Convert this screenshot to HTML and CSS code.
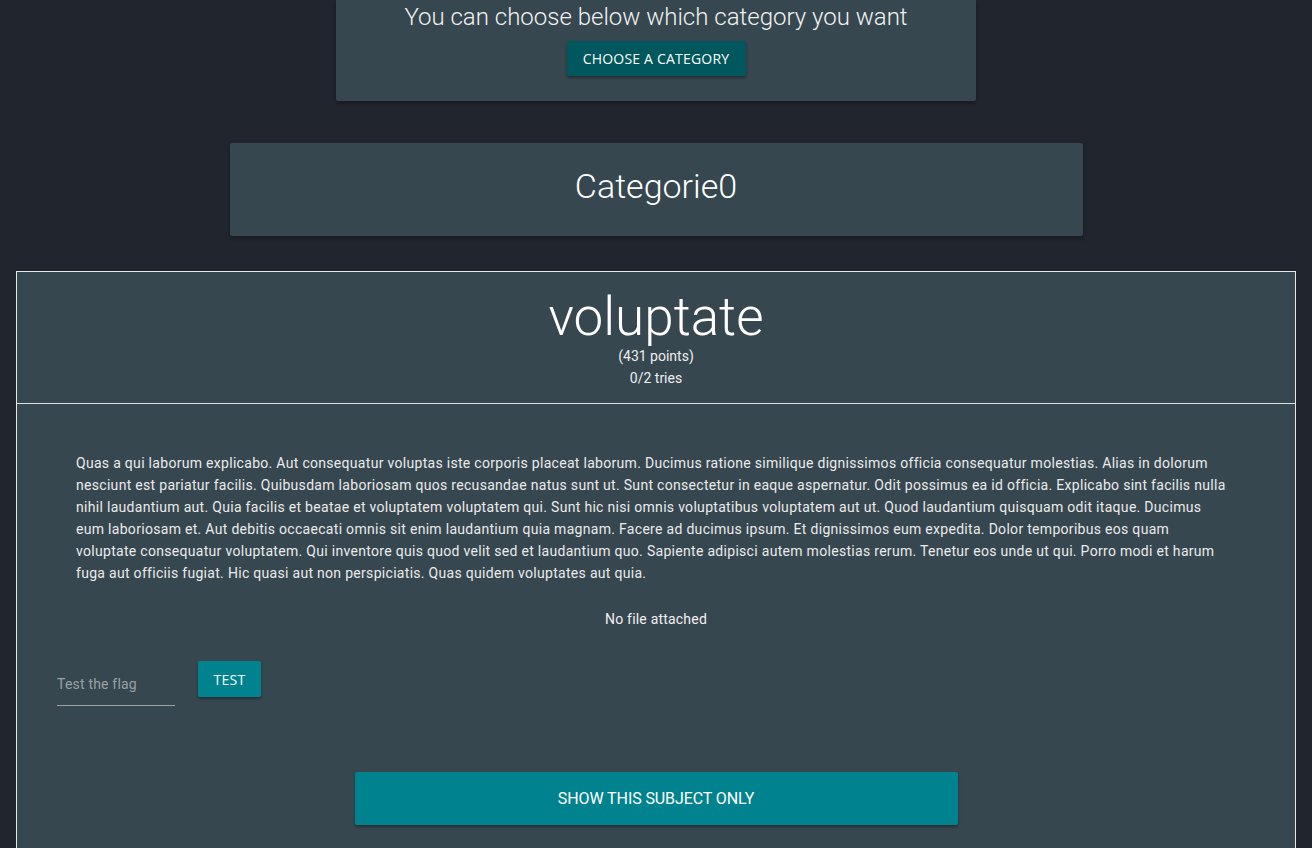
FILE: index.html
```html
<!DOCTYPE html>
<html lang="en">
<head>
<meta charset="utf-8">
<title>Challenges</title>
<link rel="stylesheet" href="styles.css">
</head>
<body>
<div class="page">
  <section class="choose-card">
    <h2 class="choose-title">You can choose below which category you want</h2>
    <button class="btn btn-dark">CHOOSE A CATEGORY</button>
  </section>

  <section class="category-card">
    <h1 class="category-title">Categorie0</h1>
  </section>

  <section class="challenge">
    <header class="challenge-head">
      <h1 class="challenge-title">voluptate</h1>
      <div class="challenge-meta">(431 points)</div>
      <div class="challenge-meta">0/2 tries</div>
    </header>
    <div class="challenge-body">
      <p class="challenge-text">Quas a qui laborum explicabo. Aut consequatur voluptas iste corporis placeat laborum. Ducimus ratione similique dignissimos officia consequatur molestias. Alias in dolorum nesciunt est pariatur facilis. Quibusdam laboriosam quos recusandae natus sunt ut. Sunt consectetur in eaque aspernatur. Odit possimus ea id officia. Explicabo sint facilis nulla nihil laudantium aut. Quia facilis et beatae et voluptatem voluptatem qui. Sunt hic nisi omnis voluptatibus voluptatem aut ut. Quod laudantium quisquam odit itaque. Ducimus eum laboriosam et. Aut debitis occaecati omnis sit enim laudantium quia magnam. Facere ad ducimus ipsum. Et dignissimos eum expedita. Dolor temporibus eos quam voluptate consequatur voluptatem. Qui inventore quis quod velit sed et laudantium quo. Sapiente adipisci autem molestias rerum. Tenetur eos unde ut qui. Porro modi et harum fuga aut officiis fugiat. Hic quasi aut non perspiciatis. Quas quidem voluptates aut quia.</p>
      <div class="attachment">No file attached</div>
      <form class="flag-row">
        <input class="flag-input" type="text" placeholder="Test the flag">
        <button class="btn btn-test" type="button">TEST</button>
      </form>
      <div class="show-wrap">
        <button class="btn btn-show">SHOW THIS SUBJECT ONLY</button>
      </div>
    </div>
  </section>
</div>
</body>
</html>
```

FILE: styles.css
```css
html, body {
  margin: 0;
  padding: 0;
}
body {
  background: #21252d;
  font-family: Roboto, "Liberation Sans", sans-serif;
  color: #ffffff;
  height: 848px;
  overflow: hidden;
}
.page {
  display: flex;
  flex-direction: column;
  align-items: center;
}
.choose-card {
  width: 640px;
  box-sizing: border-box;
  height: 101px;
  background: #37474f;
  border-radius: 0 0 2px 2px;
  box-shadow: 0 2px 4px rgba(0,0,0,0.35);
  display: flex;
  flex-direction: column;
  align-items: center;
  padding-top: 3px;
}
.choose-title {
  margin: 0;
  font-weight: 300;
  font-size: 24px;
  line-height: 28px;
  color: #f2f2f2;
}
.btn {
  border: none;
  cursor: pointer;
  color: #ffffff;
  border-radius: 2px;
  box-shadow: 0 2px 3px rgba(0,0,0,0.35);
}
.btn-dark {
  margin-top: 10px;
  background: #00575e;
  font-family: "Open Sans", sans-serif;
  font-size: 14px;
  height: 35px;
  width: 179px;
  padding: 0;
  letter-spacing: 0.2px;
}
.category-card {
  margin-top: 42px;
  width: 853px;
  height: 93px;
  box-sizing: border-box;
  padding-bottom: 8px;
  background: #37474f;
  border-radius: 2px;
  box-shadow: 0 2px 4px rgba(0,0,0,0.35);
  display: flex;
  align-items: center;
  justify-content: center;
}
.category-title {
  margin: 0;
  font-weight: 300;
  font-size: 34px;
  line-height: 40px;
  color: #ffffff;
}
.challenge {
  align-self: stretch;
  margin: 35px 16px 0;
  border: 1px solid #e8e8e8;
  background: #37474f;
}
.challenge-head {
  height: 132px;
  border-bottom: 1px solid #e0e0e0;
  display: flex;
  flex-direction: column;
  align-items: center;
  padding-top: 17px;
  box-sizing: border-box;
}
.challenge-title {
  margin: 0;
  font-weight: 300;
  font-size: 53px;
  line-height: 56px;
}
.challenge-meta {
  font-size: 14px;
  line-height: 22px;
  color: #eeeeee;
}
.challenge-body {
  padding: 48px 40px 40px;
}
.challenge-text {
  margin: 0 25px 0 19px;
  font-size: 14px;
  line-height: 22px;
  letter-spacing: 0.3px;
  color: #ebebeb;
}
.attachment {
  margin-top: 24px;
  text-align: center;
  font-size: 14px;
  line-height: 22px;
  letter-spacing: 0.2px;
  color: #f0f0f0;
}
.flag-row {
  margin: 31px 0 0;
  display: flex;
  align-items: flex-start;
  gap: 23px;
}
.flag-input {
  margin-top: 9px;
  width: 118px;
  height: 36px;
  box-sizing: border-box;
  background: transparent;
  border: none;
  border-bottom: 1px solid #a0a0a0;
  color: #ffffff;
  font-family: Roboto, sans-serif;
  font-size: 14px;
  letter-spacing: 0.2px;
  padding: 0 0 8px;
  outline: none;
}
.flag-input::placeholder {
  color: #9aa0a4;
}
.btn-test {
  background: #00838f;
  font-family: "Open Sans", sans-serif;
  font-size: 14px;
  height: 36px;
  width: 63px;
  padding: 0;
  letter-spacing: 0.3px;
}
.show-wrap {
  margin-top: 66px;
  display: flex;
  justify-content: center;
}
.btn-show {
  width: 603px;
  height: 53px;
  background: #00838f;
  font-family: Roboto, sans-serif;
  font-size: 16px;
  letter-spacing: -0.1px;
}
```
